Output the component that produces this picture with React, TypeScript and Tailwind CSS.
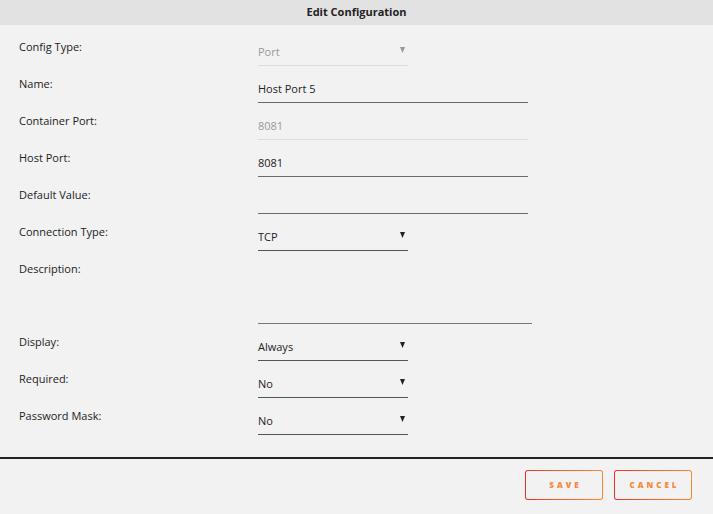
import React from "react";

const Arrow = ({ color = "#222" }: { color?: string }) => (
  <svg width="5" height="6" viewBox="0 0 5 6" className="shrink-0">
    <path d="M0 0 H5 L2.5 6 Z" fill={color} />
  </svg>
);

type Field =
  | { kind: "select"; value: string; disabled?: boolean }
  | { kind: "text"; value: string; disabled?: boolean }
  | { kind: "area" };

const rows: { label: string; field: Field }[] = [
  { label: "Config Type:", field: { kind: "select", value: "Port", disabled: true } },
  { label: "Name:", field: { kind: "text", value: "Host Port 5" } },
  { label: "Container Port:", field: { kind: "text", value: "8081", disabled: true } },
  { label: "Host Port:", field: { kind: "text", value: "8081" } },
  { label: "Default Value:", field: { kind: "text", value: "" } },
  { label: "Connection Type:", field: { kind: "select", value: "TCP" } },
  { label: "Description:", field: { kind: "area" } },
  { label: "Display:", field: { kind: "select", value: "Always" } },
  { label: "Required:", field: { kind: "select", value: "No" } },
  { label: "Password Mask:", field: { kind: "select", value: "No" } },
];

function FieldView({ field }: { field: Field }) {
  if (field.kind === "area") {
    return <div className="w-[274px] h-[66px] border-b border-[#777]" />;
  }
  if (field.kind === "text") {
    return (
      <div
        className={`w-[270px] h-[30px] flex items-end pb-[8px] border-b ${
          field.disabled ? "border-[#dcdcdc] text-[#999]" : "border-[#6a6a6a] text-[#222]"
        }`}
      >
        <span className="leading-none">{field.value}</span>
      </div>
    );
  }
  return (
    <div
      className={`w-[150px] h-[30px] flex items-end justify-between pb-[8px] border-b ${
        field.disabled ? "border-[#dcdcdc] text-[#999]" : "border-[#555] text-[#222]"
      }`}
    >
      <span className="leading-none">{field.value}</span>
      <span className="mr-[3px] mb-[4px]">
        <Arrow color={field.disabled ? "#999" : "#222"} />
      </span>
    </div>
  );
}

function Btn({ label }: { label: string }) {
  return (
    <div className="p-px rounded-[3px] bg-gradient-to-r from-[#e8302e] to-[#fb8a2c]">
      <div className="w-[76px] h-[28px] rounded-[2px] bg-[#f2f2f2] flex items-center justify-center">
        <span className="text-[8px] font-extrabold tracking-[3px] text-[#f68a3a] pl-[3px]">{label}</span>
      </div>
    </div>
  );
}

export default function App() {
  return (
    <div
      className="w-[713px] h-[514px] bg-[#f2f2f2] flex flex-col text-[11px]"
      style={{ fontFamily: '"Open Sans", "Noto Sans", sans-serif' }}
    >
      <div className="h-[25px] bg-[#e2e2e2] flex items-center justify-center font-bold text-[#222] text-[11px]">
        Edit Configuration
      </div>
      <div className="flex flex-col pt-[11px] pl-[19px] gap-[7px] flex-1">
        {rows.map((r) => (
          <div key={r.label} className="flex items-start">
            <div className="w-[239px] text-[#222] leading-none pt-[5px]">{r.label}</div>
            <FieldView field={r.field} />
          </div>
        ))}
      </div>
      <div className="h-[2px] bg-[#222]" />
      <div className="h-[55px] flex items-start justify-end gap-[11px] pt-[11px] pr-[21px]">
        <Btn label="SAVE" />
        <Btn label="CANCEL" />
      </div>
    </div>
  );
}
